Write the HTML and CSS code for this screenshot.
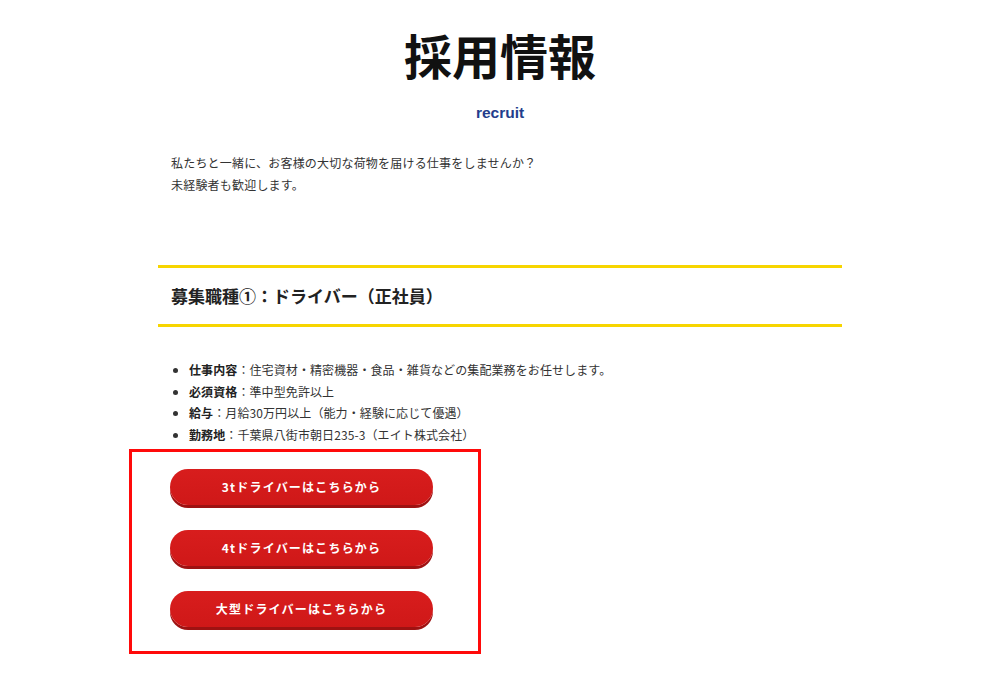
FILE: index.html
```html
<!DOCTYPE html>
<html lang="ja">
	<head>
		<meta charset="UTF-8" />
		<meta name="viewport" content="width=device-width, initial-scale=1.0" />
		<title>採用情報 | recruit</title>
		<link rel="stylesheet" href="styles.css">
	</head>

	<body>
		<main class="recruit">
			<header class="recruit-head">
				<h1>採用情報</h1>
				<p class="sub">recruit</p>
			</header>

			<p class="intro">
				私たちと一緒に、お客様の大切な荷物を届ける仕事をしませんか？<br>
				未経験者も歓迎します。
			</p>

			<section class="job">
				<h2>募集職種①：ドライバー（正社員）</h2>
				<ul class="job-list">
					<li><b>仕事内容</b>：住宅資材・精密機器・食品・雑貨などの集配業務をお任せします。</li>
					<li><b>必須資格</b>：準中型免許以上</li>
					<li><b>給与</b>：月給30万円以上（能力・経験に応じて優遇）</li>
					<li><b>勤務地</b>：千葉県八街市朝日235-3（エイト株式会社）</li>
				</ul>

				<div class="apply">
					<a class="btn" href="#">3tドライバーはこちらから</a>
					<a class="btn" href="#">4tドライバーはこちらから</a>
					<a class="btn" href="#">大型ドライバーはこちらから</a>
				</div>
			</section>
		</main>
	</body>
</html>
```

FILE: styles.css
```css
:root {
	--fg-color:   #333333;
	--title:      #111111;
	--navy:       #233d8c;
	--yellow:     #f7d500;
	--btn-red:    #d41a1a;
	--btn-shadow: #9e1212;
	--mark-red:   #ff0a0a;
}

html {
	padding: 0;
	margin: 0;
}

body {
	margin: 0;
	background: #fff;
	color: var(--fg-color);
	font-family: "Noto Sans CJK JP", "Liberation Sans", sans-serif;
	font-size: 12px;
}

p {
	margin: 0;
}

.recruit {
	width: 684px;
	margin: 0 auto;
}

.recruit-head {
	text-align: center;
	padding-top: 18px;
}
.recruit-head h1 {
	margin: 0;
	font-size: 48px;
	line-height: 72px;
	font-weight: 700;
	color: var(--title);
}
.recruit-head .sub {
	margin-top: 11px;
	font-family: "Liberation Sans", Arial, sans-serif;
	font-size: 15.5px;
	font-weight: 700;
	line-height: 24px;
	color: var(--navy);
}

.intro {
	margin-top: 27px;
	padding: 0 13px;
	line-height: 22px;
	letter-spacing: 0.2px;
}

.job {
	margin-top: 69px;
}
.job h2 {
	margin: 0;
	padding: 0 13px;
	border-top: 3px solid var(--yellow);
	border-bottom: 3px solid var(--yellow);
	font-size: 17px;
	line-height: 56px;
	font-weight: 700;
	color: #222;
}

.job-list {
	margin: 32px 0 0 13px;
	padding-left: 18px;
	line-height: 21.6px;
	letter-spacing: 0.1px;
}
.job-list b {
	color: #222;
}

.apply {
	display: flex;
	flex-direction: column;
	gap: 25px;
	width: 352px;
	box-sizing: border-box;
	margin: 4px 0 0 -29px;
	padding: 17px 0 24px 38px;
	border: 3px solid var(--mark-red);
}

.btn {
	display: block;
	width: 263px;
	height: 36px;
	line-height: 36px;
	border-radius: 18px;
	background: linear-gradient(#d81d1d, #cf1818);
	box-shadow: 0 3px 0 var(--btn-shadow);
	color: #fff;
	font-size: 12px;
	font-weight: 700;
	letter-spacing: 1.2px;
	text-align: center;
	text-decoration: none;
}
```
